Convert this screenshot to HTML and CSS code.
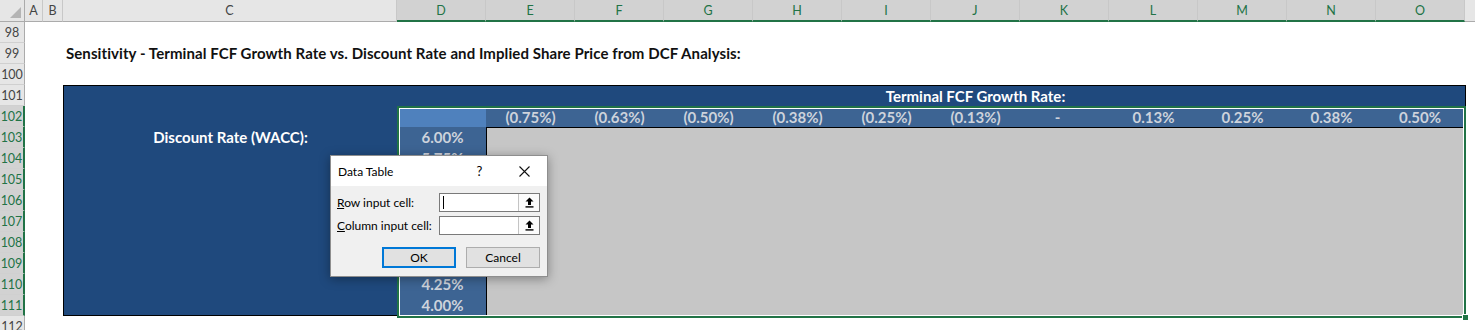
FILE: index.html
```html
<!DOCTYPE html>
<html lang="en">
<head>
    <meta charset="UTF-8">
    <meta name="viewport" content="width=device-width, initial-scale=1.0">
    <link rel="stylesheet" href="styles.css">
    <title>Sensitivity - DCF Analysis</title>
</head>
<body>
    <div class="sheet">
        <div class="col-heads">
            <div class="corner"><span class="corner-mark"></span></div>
            <div class="col-head col-a">A</div>
            <div class="col-head col-b">B</div>
            <div class="col-head col-c">C</div>
            <div class="col-head picked">D</div>
            <div class="col-head picked">E</div>
            <div class="col-head picked">F</div>
            <div class="col-head picked">G</div>
            <div class="col-head picked">H</div>
            <div class="col-head picked">I</div>
            <div class="col-head picked">J</div>
            <div class="col-head picked">K</div>
            <div class="col-head picked">L</div>
            <div class="col-head picked">M</div>
            <div class="col-head picked">N</div>
            <div class="col-head picked">O</div>
            <div class="col-head col-end"></div>
        </div>

        <div class="body">
            <div class="row-heads">
                <div class="row-head">98</div>
                <div class="row-head">99</div>
                <div class="row-head">100</div>
                <div class="row-head">101</div>
                <div class="row-head picked">102</div>
                <div class="row-head picked">103</div>
                <div class="row-head picked">104</div>
                <div class="row-head picked">105</div>
                <div class="row-head picked">106</div>
                <div class="row-head picked">107</div>
                <div class="row-head picked">108</div>
                <div class="row-head picked">109</div>
                <div class="row-head picked">110</div>
                <div class="row-head picked">111</div>
                <div class="row-head">112</div>
            </div>

            <div class="cells">
                <div class="blank-row"></div>
                <div class="title-row">Sensitivity - Terminal FCF Growth Rate vs. Discount Rate and Implied Share Price from DCF Analysis:</div>
                <div class="blank-row"></div>

                <div class="dcf">
                    <div class="dcf-top">
                        <div></div>
                        <div class="dcf-label">Terminal FCF Growth Rate:</div>
                    </div>
                    <div class="dcf-main">
                        <div class="wacc">Discount Rate (WACC):</div>
                        <div class="sel">
                            <div class="anchor"></div>
                            <div class="growth">
                                <div>(0.75%)</div>
                                <div>(0.63%)</div>
                                <div>(0.50%)</div>
                                <div>(0.38%)</div>
                                <div>(0.25%)</div>
                                <div>(0.13%)</div>
                                <div class="zero">-</div>
                                <div>0.13%</div>
                                <div>0.25%</div>
                                <div>0.38%</div>
                                <div>0.50%</div>
                            </div>
                            <div class="rates">
                                <div>6.00%</div>
                                <div>5.75%</div>
                                <div>5.50%</div>
                                <div>5.25%</div>
                                <div>5.00%</div>
                                <div>4.75%</div>
                                <div>4.50%</div>
                                <div>4.25%</div>
                                <div>4.00%</div>
                            </div>
                            <div class="results"></div>
                            <div class="fill-handle"></div>
                        </div>
                    </div>
                </div>
            </div>
        </div>

        <!-- Data Table dialog sits over the sheet -->
        <div class="dialog">
            <div class="dialog-title">
                <span class="dialog-name">Data Table</span>
                <span class="title-btn">?</span>
                <span class="title-btn">
                    <svg width="11" height="11" viewBox="0 0 11 11"><path d="M0.5 0.5 L10.5 10.5 M10.5 0.5 L0.5 10.5" stroke="#111" stroke-width="1.1" fill="none"/></svg>
                </span>
            </div>
            <div class="dialog-body">
                <div class="field">
                    <label><u>R</u>ow input cell:</label>
                    <div class="ref">
                        <div class="ref-text"><span class="caret"></span></div>
                        <div class="ref-btn">
                            <svg width="9" height="11" viewBox="0 0 9 11"><path d="M4.5 0.5 L8.5 4.5 H6 V8 H3 V4.5 H0.5 Z" fill="#000"/><rect x="0.5" y="9.2" width="8" height="1.4" fill="#000"/></svg>
                        </div>
                    </div>
                </div>
                <div class="field">
                    <label><u>C</u>olumn input cell:</label>
                    <div class="ref">
                        <div class="ref-text"></div>
                        <div class="ref-btn">
                            <svg width="9" height="11" viewBox="0 0 9 11"><path d="M4.5 0.5 L8.5 4.5 H6 V8 H3 V4.5 H0.5 Z" fill="#000"/><rect x="0.5" y="9.2" width="8" height="1.4" fill="#000"/></svg>
                        </div>
                    </div>
                </div>
                <div class="actions">
                    <button class="btn btn-default">OK</button>
                    <button class="btn">Cancel</button>
                </div>
            </div>
        </div>
    </div>
</body>
</html>
```

FILE: styles.css
```css
/* Excel-like sheet with a Data Table dialog */
body {
    margin: 0;
    font-family: Lato, "Liberation Sans", sans-serif;
    background-color: #fff;
    overflow: hidden;
}

.sheet {
    position: relative;
    width: 1475px;
    height: 330px;
    overflow: hidden;
}

/* column headers */
.col-heads {
    display: flex;
    height: 22px;
}

.corner,
.col-head {
    box-sizing: border-box;
    height: 22px;
    background-color: #e6e6e6;
    border-right: 1px solid #c8c8c8;
    border-bottom: 1px solid #ababab;
}

.corner {
    position: relative;
    width: 25px;
    border-right-color: #ababab;
}

.corner-mark {
    position: absolute;
    right: 3px;
    bottom: 3px;
    width: 0;
    height: 0;
    border-left: 11px solid transparent;
    border-bottom: 11px solid #b4b4b4;
}

.col-head {
    width: 89px;
    font-size: 12.5px;
    line-height: 22px;
    color: #444;
    text-align: center;
}

.col-a { width: 18px; }
.col-b { width: 20px; }
.col-c { width: 334px; }
.col-end { flex: 1; border-right: none; }

.col-head.picked {
    background-color: #d2d2d2;
    color: #217346;
    border-bottom: 2px solid #217346;
    line-height: 21px;
}

/* row headers + cells */
.body {
    display: flex;
}

.row-heads {
    width: 25px;
}

.row-head {
    box-sizing: border-box;
    height: 21px;
    background-color: #e6e6e6;
    border-bottom: 1px solid #d0d0d0;
    border-right: 1px solid #ababab;
    font-size: 12.5px;
    line-height: 22px;
    color: #444;
    text-align: center;
}

.row-head.picked {
    background-color: #d2d2d2;
    color: #217346;
    border-right: 2px solid #217346;
}

.cells {
    flex: 1;
    padding-left: 38px;
}

.blank-row {
    height: 21px;
}

.title-row {
    height: 21px;
    line-height: 21px;
    padding-left: 3px;
    font-size: 15px;
    font-weight: bold;
    letter-spacing: 0.08px;
    color: #111;
    white-space: nowrap;
}

/* sensitivity block */
.dcf {
    box-sizing: border-box;
    width: 1403px;
    height: 231px;
    border: 1px solid #000;
    background-color: #1f497d;
    display: grid;
    grid-template-rows: 20px 1fr;
    font-size: 15px;
    font-weight: bold;
}

.dcf-top {
    display: grid;
    grid-template-columns: 422px 1fr;
}

.dcf-label {
    color: #fff;
    text-align: center;
    line-height: 20px;
}

.dcf-main {
    display: grid;
    grid-template-columns: 333px 1fr;
}

.wacc {
    padding-top: 21px;
    line-height: 21px;
    color: #fff;
    text-align: center;
}

.sel {
    position: relative;
    border: 2px solid #217346;
    margin-right: -1px;
    margin-bottom: -1px;
    display: grid;
    grid-template-columns: 87px 1fr;
    grid-template-rows: 19px 1fr;
}

.sel::after {
    content: "";
    position: absolute;
    inset: 0;
    border: 1px solid #fff;
    pointer-events: none;
}

.anchor {
    background-color: #4f81bd;
}

.growth {
    display: grid;
    grid-template-columns: repeat(10, 89px) 1fr;
    background-color: #3d6493;
    color: #cdd3dc;
    line-height: 19px;
    text-align: center;
}

.growth .zero {
    padding-right: 14px;
}

.rates {
    background-color: #3d6493;
    color: #cdd3dc;
    text-align: center;
    overflow: hidden;
}

.rates div {
    height: 21px;
    line-height: 21px;
}

.results {
    background-color: #c6c6c6;
    border-top: 1px solid #000;
    border-left: 1px solid #000;
}

.fill-handle {
    position: absolute;
    right: -5px;
    bottom: -5px;
    width: 5px;
    height: 5px;
    background-color: #217346;
    border: 1px solid #fff;
    z-index: 2;
}

/* dialog */
.dialog {
    position: absolute;
    left: 330px;
    top: 155px;
    width: 218px;
    height: 122px;
    box-sizing: border-box;
    border: 1px solid #8e8e8e;
    background-color: #f0f0f0;
    box-shadow: 0 2px 10px rgba(0, 0, 0, 0.35);
    font-family: Lato, "Noto Sans", sans-serif;
    font-size: 12px;
    color: #000;
    z-index: 5;
}

.dialog-title {
    display: flex;
    align-items: center;
    height: 30px;
    background-color: #fff;
    padding-left: 7px;
}

.dialog-name {
    flex: 1;
}

.title-btn {
    width: 45px;
    display: flex;
    justify-content: center;
    align-items: center;
    font-size: 13px;
}

.dialog-body {
    padding: 7px 7px 0 6px;
}

.field {
    display: flex;
    justify-content: space-between;
    align-items: center;
    height: 19px;
    margin-bottom: 4px;
}

.ref {
    box-sizing: border-box;
    display: flex;
    width: 101px;
    height: 19px;
    border: 1px solid #7a7a7a;
    background-color: #fff;
}

.ref-text {
    flex: 1;
    display: flex;
    align-items: center;
    padding-left: 3px;
}

.caret {
    width: 1px;
    height: 13px;
    background-color: #000;
}

.ref-btn {
    width: 20px;
    display: flex;
    justify-content: center;
    align-items: center;
    border-left: 1px solid #c4c4c4;
    background-color: #fbfbfb;
}

.actions {
    display: flex;
    justify-content: flex-end;
    gap: 10px;
    margin-top: 12px;
}

.btn {
    box-sizing: border-box;
    width: 74px;
    height: 21px;
    padding: 0;
    font-family: Lato, "Noto Sans", sans-serif;
    font-size: 12px;
    color: #000;
    background-color: #e1e1e1;
    border: 1px solid #adadad;
}

.btn-default {
    border: 2px solid #0078d7;
}
```
